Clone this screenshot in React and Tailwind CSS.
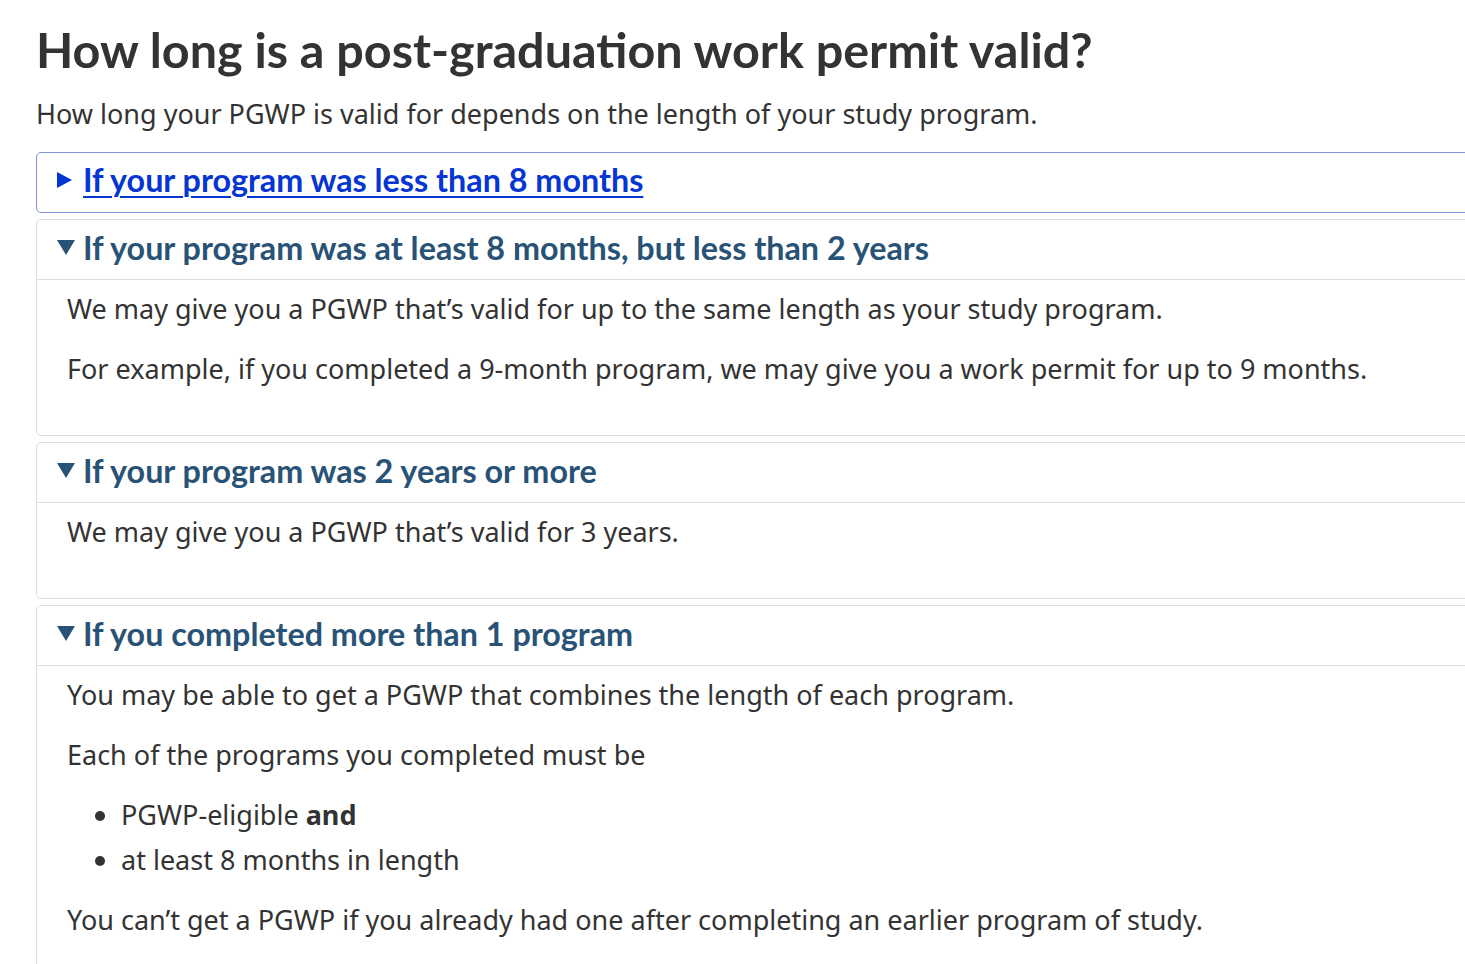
import React from 'react'

const Closed = () => (
  <svg width="15" height="16" viewBox="0 0 15 16" className="shrink-0">
    <path d="M0 0 L15 8 L0 16 Z" fill="#0535d2" />
  </svg>
)

const Open = () => (
  <svg width="18" height="15" viewBox="0 0 18 15" className="shrink-0">
    <path d="M0 0 L18 0 L9 15 Z" fill="#295376" />
  </svg>
)

const Section = ({ title, children }) => (
  <div className="mb-[6px] w-[1520px] rounded-[5px] border border-[#dddddd]">
    <div className="flex h-[60px] items-center gap-[8px] border-b border-[#dddddd] pb-[4px] pl-[20px]">
      <Open />
      <span className="font-['Lato'] text-[32.3px] font-bold leading-none text-[#295376]">{title}</span>
    </div>
    <div className="pb-[29px] pl-[30px] pt-[6px]">{children}</div>
  </div>
)

const P = ({ children }) => <p className="mb-[15px] leading-[45px]">{children}</p>

export default function App() {
  return (
    <div className="h-[964px] w-full overflow-hidden bg-white pl-[36px] pt-[20px] font-['Noto_Sans',sans-serif] text-[27px] text-[#333333]">
      <h1 className="font-['Lato',sans-serif] text-[48.5px] font-bold leading-[1.2] text-[#333333]">
        How long is a post-graduation work permit valid?
      </h1>
      <p className="mt-[13px] leading-[45px]">
        How long your PGWP is valid for depends on the length of your study program.
      </p>
      <div className="mb-[6px] mt-[16px] flex h-[61px] w-[1520px] items-center gap-[11px] rounded-[5px] border border-[#8193d9] pb-[6px] pl-[20px]">
        <Closed />
        <a href="#" className="font-['Lato'] text-[32.3px] font-bold leading-none text-[#0535d2] underline decoration-[2px] underline-offset-[4px]">
          If your program was less than 8 months
        </a>
      </div>
      <Section title="If your program was at least 8 months, but less than 2 years">
        <P>We may give you a PGWP that’s valid for up to the same length as your study program.</P>
        <P>For example, if you completed a 9-month program, we may give you a work permit for up to 9 months.</P>
      </Section>
      <Section title="If your program was 2 years or more">
        <P>We may give you a PGWP that’s valid for 3 years.</P>
      </Section>
      <Section title="If you completed more than 1 program">
        <P>You may be able to get a PGWP that combines the length of each program.</P>
        <P>Each of the programs you completed must be</P>
        <ul className="mb-[15px] list-disc pl-[54px] marker:text-[#333333]">
          <li className="leading-[45px]">PGWP-eligible <strong className="font-bold">and</strong></li>
          <li className="leading-[45px]">at least 8 months in length</li>
        </ul>
        <P>You can’t get a PGWP if you already had one after completing an earlier program of study.</P>
      </Section>
    </div>
  )
}
